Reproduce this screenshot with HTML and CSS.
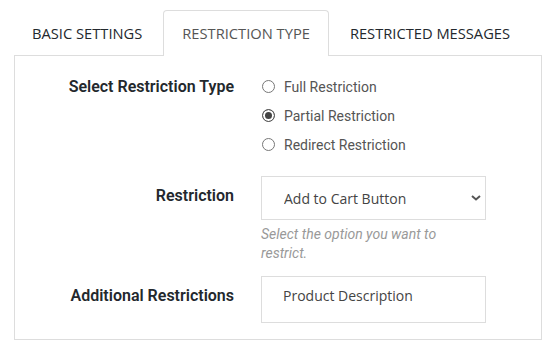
FILE: index.html
```
<!DOCTYPE html>
<html lang="en">
<head>
    <meta charset="UTF-8">
    <meta name="viewport" content="width=device-width, initial-scale=1.0">
    <title>Restriction Settings</title>
    <link rel="stylesheet" href="styles.css">
</head>
<body>
    <div class="tabs">
        <div class="tab">Basic Settings</div>
        <div class="tab active">Restriction Type</div>
        <div class="tab">Restricted Messages</div>
    </div>
    <div class="panel">
        <div class="form-row">
            <div class="label label-radios">Select Restriction Type</div>
            <div class="radio-list">
                <label class="radio-item"><input type="radio" name="rtype"> Full Restriction</label>
                <label class="radio-item"><input type="radio" name="rtype" checked> Partial Restriction</label>
                <label class="radio-item"><input type="radio" name="rtype"> Redirect Restriction</label>
            </div>
        </div>
        <div class="form-row row-select">
            <div class="label">Restriction</div>
            <div class="field">
                <div class="select-wrap">
                    <select class="select">
                        <option>Add to Cart Button</option>
                    </select>
                    <svg class="chevron" width="10" height="6" viewBox="0 0 10 6">
                        <path d="M1 1l4 3.5L9 1" fill="none" stroke="#555" stroke-width="2"/>
                    </svg>
                </div>
                <p class="help">Select the option you want to restrict.</p>
            </div>
        </div>
        <div class="form-row row-extra">
            <div class="label">Additional Restrictions</div>
            <div class="field">
                <textarea class="textbox" readonly>Product Description</textarea>
            </div>
        </div>
    </div>
</body>
</html>
```

FILE: styles.css
```
* {
    margin: 0;
    padding: 0;
    box-sizing: border-box;
}

body {
    font-family: 'Open Sans', sans-serif;
    background: #fff;
    padding: 10px 0 0 14px;
    color: #23282d;
}

.tabs {
    display: flex;
    align-items: flex-end;
    gap: 2px;
    margin-left: -1px;
}

.tab {
    height: 45px;
    line-height: 44px;
    padding: 0 18px;
    border: 1px solid transparent;
    border-bottom: none;
    font-size: 14.7px;
    text-transform: uppercase;
    color: #23282d;
}

.tab.active {
    position: relative;
    height: 46px;
    margin-bottom: -1px;
    background: #fff;
    border-color: #ddd;
    border-radius: 4px 4px 0 0;
    color: #555;
}

.panel {
    width: 528px;
    border: 1px solid #ddd;
    padding: 16px 0;
}

.form-row {
    display: grid;
    grid-template-columns: 219px 225px;
    column-gap: 27px;
}

.row-select {
    margin-top: 17px;
}

.row-extra {
    margin-top: 13px;
}

.label {
    text-align: right;
    font-family: 'Roboto', sans-serif;
    font-weight: 600;
    font-size: 16px;
    line-height: 19px;
    padding-top: 10px;
    color: #23282d;
}

.label-radios {
    line-height: 29px;
    padding-top: 0;
}

.radio-item {
    display: flex;
    align-items: center;
    gap: 9px;
    height: 29px;
    font-family: 'Roboto', sans-serif;
    font-size: 14px;
    color: #555;
}

.radio-item input {
    appearance: none;
    width: 13px;
    height: 13px;
    margin-left: 1px;
    border: 1px solid #777;
    border-radius: 50%;
    background: #fff;
}

.radio-item input:checked {
    border-color: #555;
    background: #444;
    box-shadow: inset 0 0 0 2px #fff;
}

.select-wrap {
    position: relative;
}

.select {
    appearance: none;
    display: block;
    width: 225px;
    height: 44px;
    padding: 0 30px 0 22px;
    border: 1px solid #ddd;
    border-radius: 0;
    background: #fff;
    font-family: 'Open Sans', sans-serif;
    font-size: 14px;
    color: #444;
}

.chevron {
    position: absolute;
    right: 5px;
    top: 19px;
}

.help {
    margin-top: 5px;
    width: 200px;
    font-family: 'Roboto', sans-serif;
    font-style: italic;
    font-size: 14px;
    line-height: 19px;
    color: #999;
}

.textbox {
    display: block;
    width: 225px;
    height: 47px;
    padding: 9px 21px;
    border: 1px solid #ddd;
    resize: none;
    overflow: hidden;
    font-family: 'Open Sans', sans-serif;
    font-size: 14px;
    line-height: 19px;
    color: #444;
}
```
